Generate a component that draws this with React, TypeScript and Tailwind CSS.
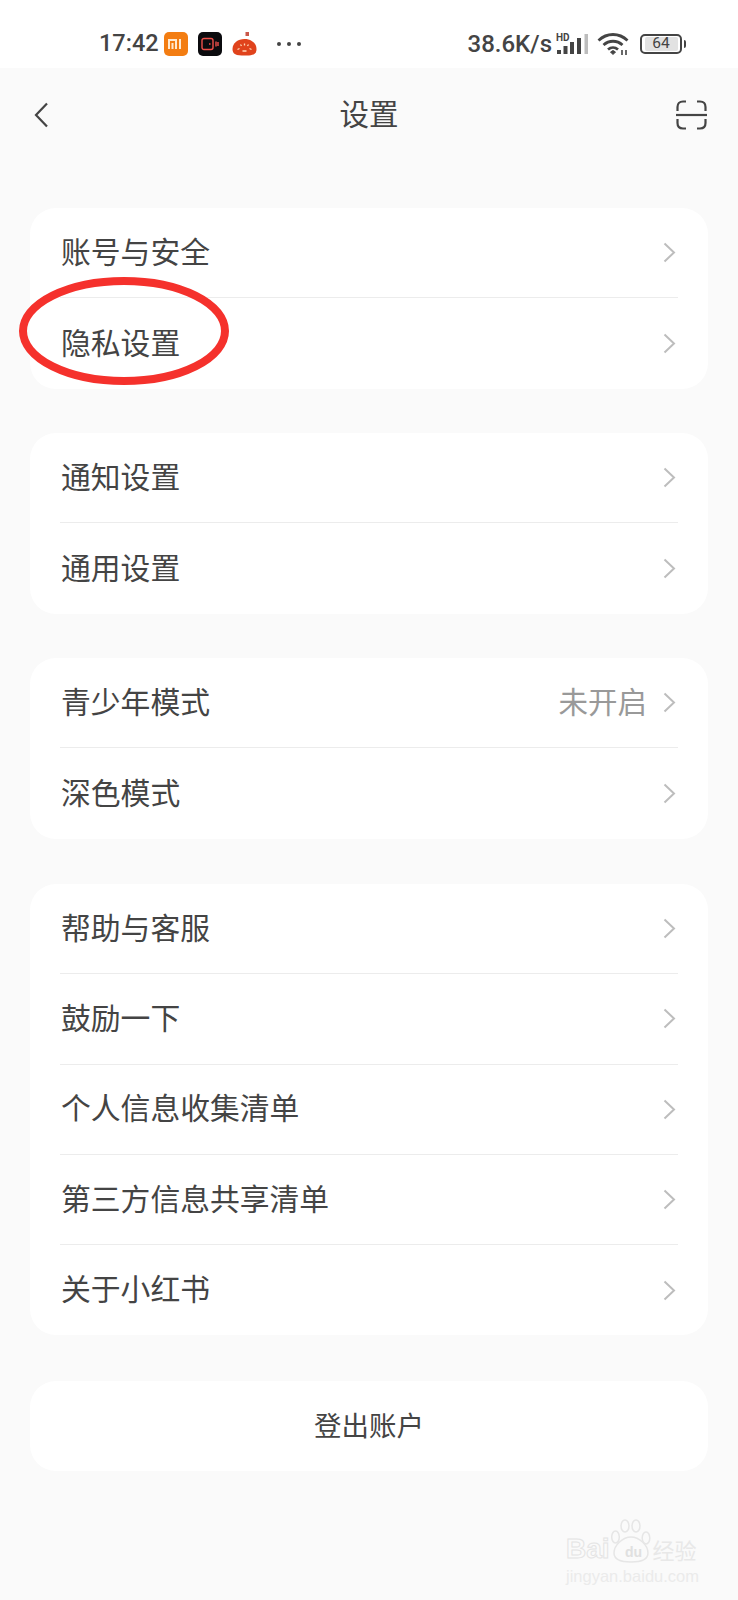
const cjk = "font-['Noto_Sans_CJK_SC','Noto_Sans',sans-serif]";

type RowType = { label: string; value?: string };

const groups: { rows: RowType[]; gap: string }[] = [
  { rows: [{ label: "账号与安全" }, { label: "隐私设置" }], gap: "mb-[44.4px]" },
  { rows: [{ label: "通知设置" }, { label: "通用设置" }], gap: "mb-[44.4px]" },
  { rows: [{ label: "青少年模式", value: "未开启" }, { label: "深色模式" }], gap: "mb-[45.4px]" },
  {
    rows: [
      { label: "帮助与客服" },
      { label: "鼓励一下" },
      { label: "个人信息收集清单" },
      { label: "第三方信息共享清单" },
      { label: "关于小红书" },
    ],
    gap: "mb-[45.5px]",
  },
];

const Row = ({ row, last }: { row: RowType; last: boolean }) => (
  <div className="px-[30px]">
    <div className={"flex h-[90.3px] items-center justify-between " + (last ? "" : "border-b border-[#ececec]")}>
      <span className="pb-[4px] pl-px text-[29.8px] leading-none text-[#444444]">{row.label}</span>
      <div className="flex items-center pr-[2px]">
        {row.value && <span className="mr-[16px] pb-[3px] text-[29.5px] leading-none text-[#999999]">{row.value}</span>}
        <svg width="13" height="21" viewBox="0 0 13 21" fill="none" stroke="#bdbdbd" strokeWidth="2">
          <path d="M1.5 1.5L11 10.5L1.5 19.5" />
        </svg>
      </div>
    </div>
  </div>
);

const StatusBar = () => (
  <div className="flex h-[68px] items-center justify-between bg-white pl-[99px] pr-[52px] pt-[19px] font-['Roboto',sans-serif] text-[#444444]">
    <div className="flex items-center">
      <span className="w-[65px] text-[23.5px] font-medium leading-none">17:42</span>
      {/* 小米 */}
      <div className="flex h-[24px] w-[24px] items-center justify-center rounded-[5px] bg-[#f37d12]">
        <svg width="16" height="12" viewBox="0 0 16 12" fill="none" stroke="#ffe9d0" strokeWidth="2">
          <path d="M1 11V2H8V11M4.5 11V5M12 1V11" />
        </svg>
      </div>
      {/* 录屏 */}
      <div className="ml-[10px] flex h-[24px] w-[24px] items-center justify-center rounded-[5px] bg-[#0b0b0e]">
        <svg width="18" height="14" viewBox="0 0 18 14" fill="none" stroke="#f0504a" strokeWidth="1.4">
          <rect x="1" y="1.5" width="11" height="11" rx="2" />
          <path d="M8 7H9.5M15 4.5V9.5M17 5V9" />
        </svg>
      </div>
      {/* 番茄 */}
      <svg className="ml-[10px]" width="25" height="24" viewBox="0 0 25 24">
        <rect x="13.5" y="0" width="3.5" height="4" fill="#c9584a" />
        <path d="M0.5 17C0.5 11 6 7 12.5 7C19 7 24.5 11 24.5 17C24.5 22.5 21 23.5 12.5 23.5C4 23.5 0.5 22.5 0.5 17Z" fill="#e0431c" />
        <path d="M5.5 17.5L7.5 16.5M8.5 12.5L9.5 14M12.5 11.5V13.5M16.5 12.5L15.5 14M19.5 17.5L17.5 16.5M10.5 19H14.5" stroke="#ffd9b8" strokeWidth="1.3" />
      </svg>
      {/* 省略 */}
      <div className="ml-[20px] flex gap-[6px]">
        <div className="h-[4px] w-[4px] rounded-full bg-[#444444]" />
        <div className="h-[4px] w-[4px] rounded-full bg-[#444444]" />
        <div className="h-[4px] w-[4px] rounded-full bg-[#444444]" />
      </div>
    </div>
    <div className="flex items-center">
      <span className="text-[24px] font-medium leading-none">38.6K/s</span>
      {/* 信号 */}
      <svg className="ml-[4px]" width="33" height="22" viewBox="0 0 33 22">
        <text x="0" y="8" fontSize="10" fontWeight="700" fill="#444444" fontFamily="Roboto, sans-serif">HD</text>
        <rect x="1" y="17" width="4" height="4" fill="#444444" />
        <rect x="7.5" y="13" width="4" height="8" fill="#444444" />
        <rect x="14" y="9" width="4" height="12" fill="#444444" />
        <rect x="21" y="5" width="4" height="16" fill="#444444" />
        <rect x="28.5" y="1" width="3.5" height="20" fill="#bdbdbd" />
      </svg>
      {/* 无线 */}
      <svg className="ml-[8px]" width="33" height="24" viewBox="0 0 33 24" fill="none" stroke="#444444" strokeWidth="2.8">
        <path d="M1.5 8.5C10 0.5 22 0.5 30.5 8.5" />
        <path d="M6.5 13C12 8 20 8 25.5 13" />
        <path d="M11 17.5C14 15 18 15 21 17.5" />
        <path d="M13.5 20L16 22.5L18.5 20L16 18.5Z" fill="#444444" strokeWidth="1" />
        <path d="M25 18V23M29 18V23" strokeWidth="1.6" />
      </svg>
      {/* 电池 */}
      <div className="ml-[10px] flex items-center">
        <div className="flex h-[20px] w-[42px] items-center justify-center rounded-[5px] border-2 border-[#444444]">
          <div className="flex h-[14px] w-[33px] items-center justify-center rounded-[2px] bg-[#e2e2e2] text-[15.5px] leading-none">64</div>
        </div>
        <div className="ml-[2px] h-[8px] w-[2px] rounded-r-full bg-[#444444]" />
      </div>
    </div>
  </div>
);

const Header = () => (
  <div className="flex h-[93px] items-center pl-[34px] pr-[31px]">
    <div className="flex-1">
      <svg width="14" height="26" viewBox="0 0 14 26" fill="none" stroke="#444444" strokeWidth="2.2">
        <path d="M13 1.5L2 13L13 24.5" />
      </svg>
    </div>
    <span className="pb-[4px] pr-[3px] text-[29.5px] leading-none text-[#444444]">设置</span>
    <div className="flex flex-1 justify-end">
      <svg width="31" height="30" viewBox="0 0 31 30" fill="none" stroke="#444444" strokeWidth="2.2">
        <path d="M1.5 11V7C1.5 3.5 3.5 1.5 7 1.5H10M21 1.5H24C27.5 1.5 29.5 3.5 29.5 7V11" />
        <path d="M0 15H31" />
        <path d="M1.5 19V23C1.5 26.5 3.5 28.5 7 28.5H10M21 28.5H24C27.5 28.5 29.5 26.5 29.5 23V19" />
      </svg>
    </div>
  </div>
);

const Watermark = () => (
  <div className="absolute left-[566px] top-[1519px] w-[136px] whitespace-nowrap font-['Liberation_Sans',sans-serif] text-[#ebebeb]">
    <svg className="absolute left-[45px] top-0" width="40" height="44" viewBox="0 0 40 44" fill="#fafafa" stroke="#e6e6e6" strokeWidth="1.5">
      <ellipse cx="4.5" cy="18" rx="3.8" ry="6" />
      <ellipse cx="14" cy="7" rx="4" ry="6" />
      <ellipse cx="25" cy="7" rx="4" ry="6" />
      <ellipse cx="35" cy="19" rx="3.8" ry="6" />
      <path d="M3 34C3 26 12 18 20 18C28 18 37 26 37 34C37 41 28 43 20 43C12 43 3 41 3 34Z" />
    </svg>
    <div className="flex h-[44px] items-end">
      <span className="text-[28px] font-bold leading-[29px] text-transparent [-webkit-text-stroke:1px_#e4e4e4]">Bai</span>
      <span className="relative ml-[5px] w-[38px] text-center text-[14px] font-bold leading-[21px] text-[#e0e0e0]">du</span>
      <span className={cjk + " text-[22px] leading-[28px] text-[#e8e8e8]"}>经验</span>
    </div>
    <div className="mt-[5px] text-[16.5px] leading-none">jingyan.baidu.com</div>
  </div>
);

export default function App() {
  return (
    <div className={"relative h-[1600px] w-[738px] overflow-hidden bg-[#fafafa] " + cjk}>
      <StatusBar />
      <Header />
      <div className="px-[30px] pt-[47px]">
        {groups.map((g) => (
          <div key={g.rows[0].label} className={"overflow-hidden rounded-[26px] bg-white " + g.gap}>
            {g.rows.map((r, i) => (
              <Row key={r.label} row={r} last={i === g.rows.length - 1} />
            ))}
          </div>
        ))}
        {/* 登出 */}
        <div className="flex h-[90px] items-center justify-center rounded-[26px] bg-white pb-[2px] text-[27.5px] leading-none text-[#444444]">
          登出账户
        </div>
      </div>
      {/* 红圈标注 */}
      <svg className="absolute left-[18px] top-[275px]" width="214" height="112" viewBox="0 0 214 112" fill="none">
        <ellipse cx="106" cy="56" rx="101" ry="50" stroke="#f5312c" strokeWidth="8" />
      </svg>
      <Watermark />
    </div>
  );
}
